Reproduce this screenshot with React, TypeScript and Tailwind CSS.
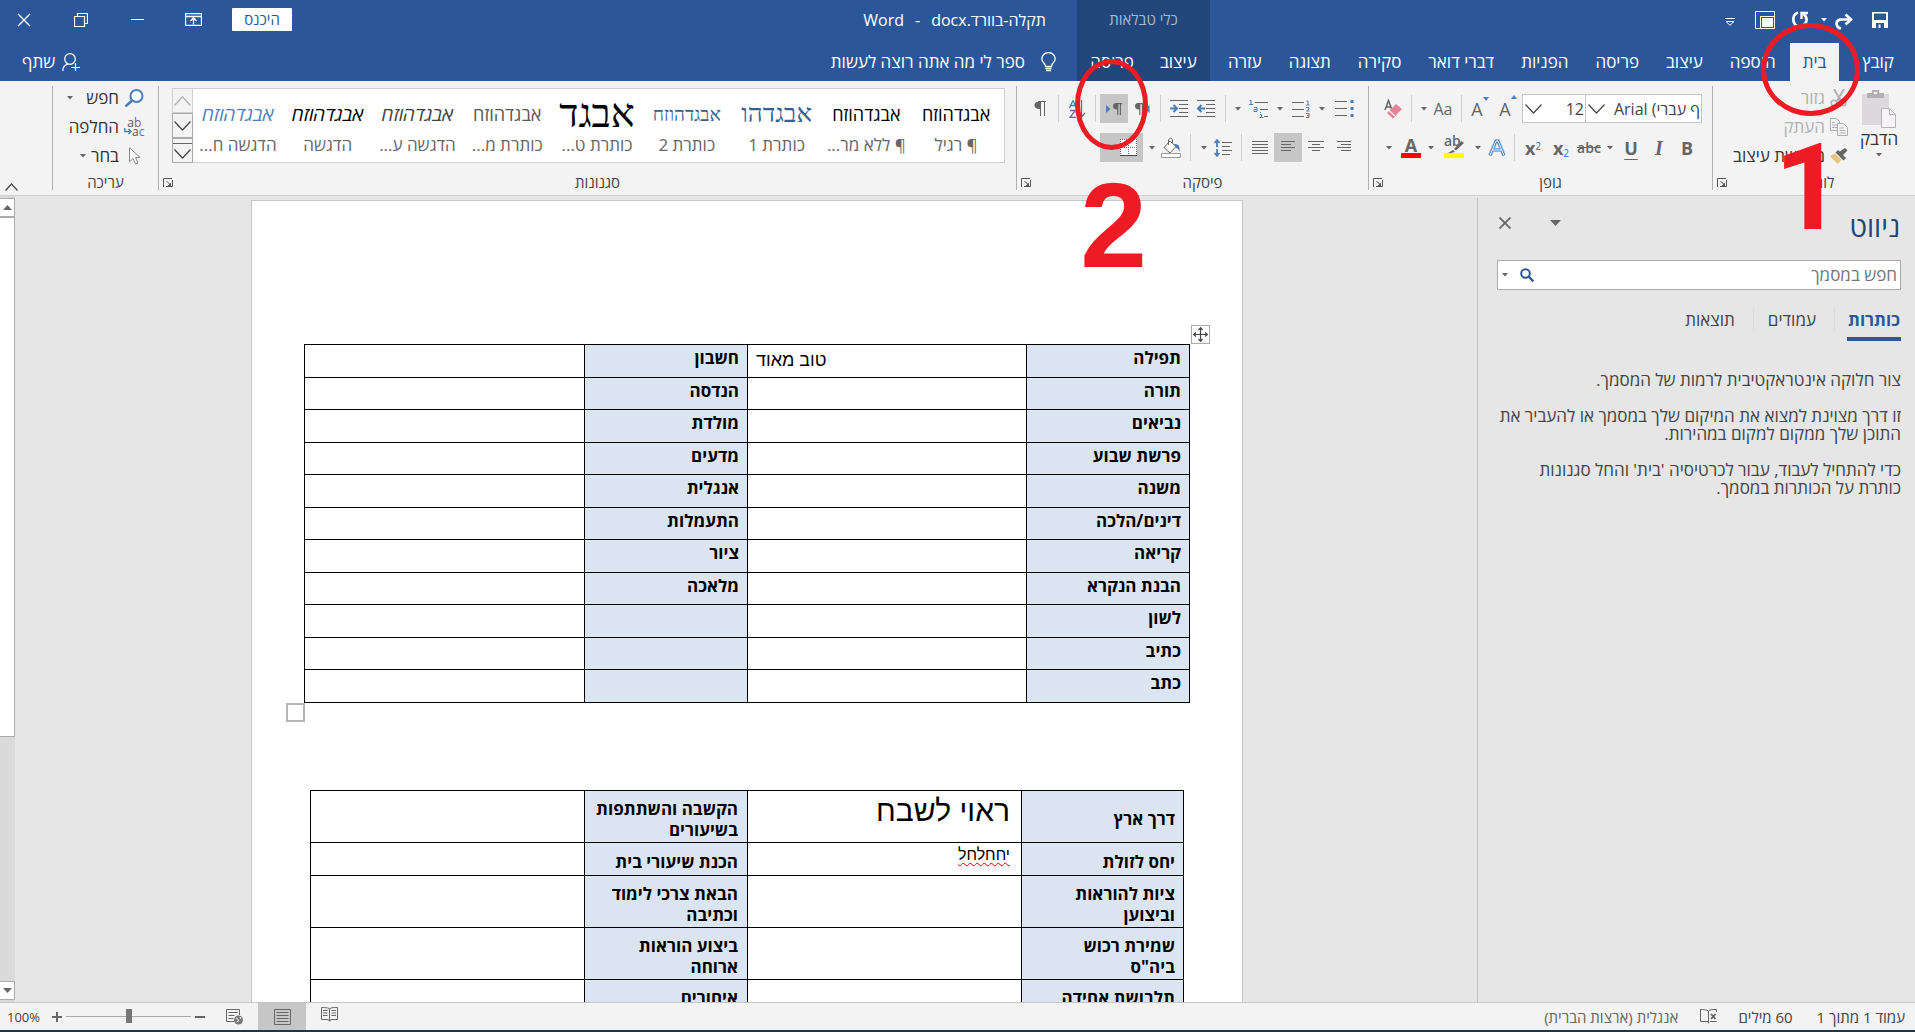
import React from "react";

type Kids = { children?: React.ReactNode };

function Svg({ w, h, children }: Kids & { w: number; h: number }) {
  return (
    <svg width={w} height={h} viewBox={`0 0 ${w} ${h}`} fill="none" aria-hidden className="shrink-0">
      {children}
    </svg>
  );
}

function Caret() {
  return (
    <Svg w={6} h={4}>
      <path d="M0 0h6L3 3.5z" fill="#666" />
    </Svg>
  );
}

function Tool({ name, w = "w-7", on = false, children }: Kids & { name: string; w?: string; on?: boolean }) {
  return (
    <button
      type="button"
      aria-label={name}
      aria-pressed={on}
      className={`${w} ${on ? "bg-[#c6c6c6]" : ""} flex h-[29px] shrink-0 items-center justify-center text-[#666]`}
    >
      {children}
    </button>
  );
}

function Drop({ name, w }: { name: string; w: string }) {
  return (
    <Tool name={name} w={w}>
      <Caret />
    </Tool>
  );
}

function Sep({ w = "w-[9px]" }: { w?: string }) {
  return (
    <span className={`${w} flex h-[27px] shrink-0 justify-center`}>
      <span className="w-px bg-[#d0d0d0]" />
    </span>
  );
}

function Group({ title, className = "", launcher = true, children }: Kids & { title: string; className?: string; launcher?: boolean }) {
  return (
    <section className={`flex h-[104px] shrink-0 flex-col border-l border-[#b1b1b1] ${className}`}>
      <div className="h-[90px]">{children}</div>
      <div className={`relative flex h-4 items-center justify-center text-[15px] leading-4 text-[#444] ${launcher ? "pl-5" : ""}`}>
        <span>{title}</span>
        {launcher && (
          <button type="button" aria-label={`${title} - אפשרויות`} className="absolute left-1 top-1">
            <Svg w={10} h={9}>
              <path d="M.5 9V.5H9M9.500 2v6.500H3M3.500 3l4 4" stroke="#555" />
              <path d="M8 4.500V8H4.500z" fill="#555" />
            </Svg>
          </button>
        )}
      </div>
    </section>
  );
}

const lines = (x1: number[], x2: number[]) => x1.map((a, i) => `M${a} ${i * 3 + 0.5}H${x2[i]}`).join("");

function QuickAccess() {
  return (
    <div className="flex h-[43px] items-center pr-[27px]">
      <button type="button" aria-label="שמור" className="pb-[3px]">
        <Svg w={16} h={16}>
          <path d="M0 0h16v16H0zM2 1.500v6.500h12V1.500zM4 11v5h8v-5z" fill="#fff" fillRule="evenodd" />
          <path d="M6.500 12.500h2V16h-2z" fill="#fff" />
        </Svg>
      </button>
      <button type="button" aria-label="בטל" className="mr-[19px] pb-px">
        <Svg w={18} h={17}>
          <path d="M6 15.500C1 14.500-.5 7.500 5.500 6.500h10" stroke="#fff" strokeWidth="2.600" />
          <path d="M10.500 1.500l5.500 5-5.500 5" stroke="#fff" strokeWidth="2.600" />
        </Svg>
      </button>
      <button type="button" aria-label="רשימת ביטולים" className="mr-2 pb-1">
        <Svg w={6} h={4}><path d="M0 0h6L3 3.500z" fill="#fff" /></Svg>
      </button>
      <button type="button" aria-label="חזור" className="mr-[13px] pb-1">
        <Svg w={16} h={17}>
          <path d="M6 1.500C0 3.500 0 12 5 15M10 15c5-2 6.500-8 1.500-12" stroke="#fff" strokeWidth="2.600" />
          <path d="M9.500 8V2H16" stroke="#fff" strokeWidth="2.400" />
        </Svg>
      </button>
      <button type="button" aria-label="מצב מגע" className="mr-[17px] pb-[3px]">
        <Svg w={20} h={18}>
          <path d="M.5.5h19v17H.5zM5.500 17.500v-12h14" stroke="#fff" />
          <path d="M7 7h11v9H7z" fill="#fff" />
        </Svg>
      </button>
      <button type="button" aria-label="התאמה אישית" className="mr-5">
        <Svg w={10} h={8}>
          <path d="M0 .5h10M1 3.500h8L5 7.300z" stroke="#fff" />
        </Svg>
      </button>
    </div>
  );
}

function Tab({ children, on = false }: Kids & { on?: boolean }) {
  return (
    <button
      type="button"
      role="tab"
      aria-selected={on}
      className={`flex h-[38px] items-center whitespace-nowrap px-[13px] text-[17px] leading-6 ${on ? "bg-[#f3f3f3] text-[#2b579a]" : "text-white"}`}
    >
      {children}
    </button>
  );
}

function Header() {
  return (
    <header className="flex h-[81px] shrink-0 bg-[#2b579a] text-white">
      <div className="w-[705px] shrink-0">
        <QuickAccess />
        <div role="tablist" className="flex gap-px pr-2">
          <Tab>קובץ</Tab>
          <span className="w-2" />
          <Tab on>בית</Tab>
          {["הוספה", "עיצוב", "פריסה", "הפניות", "דברי דואר", "סקירה", "תצוגה", "עזרה"].map((t) => (
            <Tab key={t}>{t}</Tab>
          ))}
        </div>
      </div>
      <div className="w-[133px] shrink-0 bg-[#22457a]">
        <div className="flex h-[43px] items-center justify-center pb-1 text-[15px] text-[#a5b8d6]">כלי טבלאות</div>
        <div className="flex justify-center">
          <Tab>עיצוב</Tab>
          <Tab>פריסה</Tab>
        </div>
      </div>
      <div className="min-w-0 flex-1">
        <div className="flex h-[43px] items-center pb-1">
          <h1 className="mr-[31px] flex gap-[11px] text-base">
            <bdi dir="rtl">תקלה-בוורד.docx</bdi>
            <bdi>-</bdi>
            <bdi>Word</bdi>
          </h1>
          <div className="mr-auto flex items-center pl-[17px]">
            <button type="button" className="flex h-[23px] w-[60px] items-center justify-center rounded-[1px] bg-white text-[15px] text-[#2b579a]">היכנס</button>
            <button type="button" aria-label="אפשרויות תצוגה של רצועת הכלים" className="mr-[30px]">
              <Svg w={17} h={13}>
                <path d="M.5.5h16v12H.5zM.5 3.500h16M8.500 11.500v-6M5.500 8l3-3 3 3" stroke="#fff" strokeWidth="1.300" />
              </Svg>
            </button>
            <button type="button" aria-label="מזער" className="mr-[41px]">
              <Svg w={13} h={13}><path d="M0 6.500h13" stroke="#fff" /></Svg>
            </button>
            <button type="button" aria-label="שחזר" className="mr-[43px]">
              <Svg w={14} h={14}><path d="M.5 3.500h10v10H.5zM3.500 3.500v-3h10v10h-3" stroke="#fff" strokeWidth="1.200" /></Svg>
            </button>
            <button type="button" aria-label="סגור" className="mr-[43px]">
              <Svg w={14} h={14}><path d="M1 1l12 12M13 1L1 13" stroke="#fff" strokeWidth="1.400" /></Svg>
            </button>
          </div>
        </div>
        <div className="flex h-[38px] items-center pr-[21px]">
          <Svg w={15} h={20}>
            <path d="M4.500 14.500C4.500 11 .8 10.500.8 6.800a6.700 6.200 0 0 1 13.400 0c0 3.700-3.700 4.200-3.700 7.700z" stroke="#fff" strokeWidth="1.300" />
            <path d="M4.500 16.500h6M5 18.500h5" stroke="#fff" strokeWidth="1.500" />
          </Svg>
          <button type="button" className="mr-4 text-[17px] leading-6">ספר לי מה אתה רוצה לעשות</button>
          <button type="button" className="ml-[22px] mr-auto flex items-center gap-[7px] text-[17px] leading-6">
            <Svg w={18} h={18}>
              <circle cx="8" cy="6" r="5.300" stroke="#fff" strokeWidth="1.200" />
              <path d="M.8 18c0-4 2-6 5-6.800M13.500 10v8M9 14.500h9" stroke="#fff" strokeWidth="1.200" />
            </Svg>
            שתף
          </button>
        </div>
      </div>
    </header>
  );
}

function ClipboardGroup() {
  return (
    <Group title="לוח" className="w-[203px]">
      <div className="flex pr-[14px]">
        <button type="button" className="flex w-11 flex-col items-center pt-1 text-[17px] leading-5 text-[#333]">
          <Svg w={34} h={38}>
            <path d="M0 4h27v31H0z" fill="#dcd8dc" />
            <path d="M5 3h5V0h7v3h5v5H5z" fill="#b3b0b3" />
            <path d="M12 2h3v2h-3z" fill="#f3f3f3" />
            <path d="M19.500 18.500h8l6 6v13h-14z" fill="#f7f4f9" stroke="#b5b2b5" />
            <path d="M27.500 18.500v6h6" stroke="#b5b2b5" />
          </Svg>
          <span className="mt-px">הדבק</span>
          <span className="mt-1"><Caret /></span>
        </button>
        <div className="mr-[9px] flex flex-col gap-[5px] text-[17px] leading-6">
          <button type="button" className="flex h-6 items-center gap-[5px] text-[#b1b1b1]">
            <Svg w={18} h={18}>
              <path d="M4 0l7 12M14 0L7 12" stroke="#b1b1b1" strokeWidth="2" />
              <circle cx="4" cy="14" r="2.800" stroke="#b1b1b1" strokeWidth="1.500" />
              <circle cx="13" cy="14" r="2.800" stroke="#b1b1b1" strokeWidth="1.500" />
            </Svg>
            גזור
          </button>
          <button type="button" className="flex h-6 items-center gap-[5px] text-[#b1b1b1]">
            <Svg w={18} h={18}>
              <path d="M.5.5h6l3 3v9h-9zM2 4.500h3M2 7h6M2 9.500h5" stroke="#b1aeb1" />
              <path d="M7.500 5.500h6l4 4v8h-10z" fill="#f7f4f9" stroke="#b1aeb1" />
              <path d="M9.500 10h4M9.500 12.500h6M9.500 15h6" stroke="#b1aeb1" />
            </Svg>
            העתק
          </button>
          <button type="button" className="flex h-6 items-center gap-[5px] text-[#333]">
            <Svg w={18} h={18}>
              <path d="M15 1l2.500 2.500-5 5L9 5z" fill="#666" />
              <path d="M8 3l8 8-2.500 2.500-8-8z" fill="#666" />
              <path d="M5 6.500l6.500 6.500L7.500 17 0 9z" fill="#eac282" />
            </Svg>
            מברשת עיצוב
          </button>
        </div>
      </div>
    </Group>
  );
}

function ChevronDown() {
  return (
    <Svg w={17} h={10}><path d="M.5.5l8 8.500 8-8.500" stroke="#444" strokeWidth="1.200" /></Svg>
  );
}

function FontGroup() {
  return (
    <Group title="גופן" className="w-[344px]">
      <div className="flex flex-col gap-[10px] pt-2">
        <div className="flex items-center pr-[10px]">
          <div className="flex h-[29px] w-[117px] items-center border border-[#c6c6c6] bg-white">
            <input aria-label="גופן" dir="ltr" defaultValue="Arial (ף עברי" className="min-w-0 flex-1 pr-px text-right text-base leading-6 text-[#444] outline-none" />
            <button type="button" aria-label="רשימת גופנים" className="ml-[2px]"><ChevronDown /></button>
          </div>
          <div className="-mr-px flex h-[29px] w-16 items-center border border-[#c6c6c6] bg-white">
            <input aria-label="גודל גופן" dir="ltr" defaultValue="12" className="min-w-0 flex-1 pr-px text-right text-base leading-6 text-[#444] outline-none" />
            <button type="button" aria-label="רשימת גדלים" className="ml-[2px]"><ChevronDown /></button>
          </div>
          <Tool name="הגדל גופן">
            <span dir="ltr" className="flex items-start"><span className="text-lg leading-7">A</span><Svg w={6} h={7}><path d="M0 4h6L3 0z" fill="#4a7ebb" /></Svg></span>
          </Tool>
          <Tool name="הקטן גופן">
            <span dir="ltr" className="flex items-start"><span className="text-lg leading-7">A</span><Svg w={6} h={7}><path d="M0 2h6L3 6z" fill="#4a7ebb" /></Svg></span>
          </Tool>
          <Sep />
          <Tool name="שנה רישיות"><span dir="ltr" className="text-base">Aa</span></Tool>
          <Drop name="אפשרויות רישיות" w="w-[10px]" />
          <Sep w="w-4" />
          <Tool name="נקה עיצוב" w="w-5">
            <Svg w={18} h={20}>
              <path d="M1 11L4.500 1.500 8 11M2.500 8h4" stroke="#666" strokeWidth="1.500" />
              <path d="M12 5l6 5-9 9.500-6-5.500z" fill="#e8849a" />
              <path d="M5 11.500l6 5.500" stroke="#f3f3f3" strokeWidth="1.200" />
            </Svg>
          </Tool>
        </div>
        <div className="flex items-center pr-[11px]">
          <Tool name="מודגש"><b className="text-lg">B</b></Tool>
          <Tool name="נטוי"><i className="font-['Liberation_Serif'] text-xl font-bold">I</i></Tool>
          <Tool name="קו תחתון"><span className="text-lg font-bold underline underline-offset-4">U</span></Tool>
          <Drop name="סגנון קו תחתון" w="w-[14px]" />
          <Tool name="קו חוצה"><span className="text-sm font-semibold line-through">abc</span></Tool>
          <Tool name="כתב תחתי"><span dir="ltr" className="text-lg font-bold leading-7">x<sub className="text-[10px] font-normal text-[#2b7cd3]">2</sub></span></Tool>
          <Tool name="כתב עילי"><span dir="ltr" className="text-lg font-bold leading-7">x<sup className="text-[10px] font-normal text-[#2b7cd3]">2</sup></span></Tool>
          <Sep />
          <Tool name="אפקטי טקסט" w="w-[26px]">
            <Svg w={18} h={18}>
              <path d="M2 16.500L8 2h2l6 14.500M4.500 11h9" stroke="#a9c9ee" strokeWidth="4" />
              <path d="M2 16.500L8 2h2l6 14.500M4.500 11h9" stroke="#3c7cc4" strokeWidth="2.600" />
              <path d="M2 16.500L8 2h2l6 14.500M4.500 11h9" stroke="#fff" />
            </Svg>
          </Tool>
          <Drop name="סוגי אפקטים" w="w-3" />
          <Tool name="צבע סימון" w="w-9">
            <span className="relative block h-[21px] w-5 border-b-[5px] border-[#ffff00]">
              <span dir="ltr" className="absolute -top-1 left-0 text-sm font-semibold leading-4">ab</span>
              <span className="absolute left-1 top-1"><Svg w={16} h={12}><path d="M13.500 0L16 2 8 9.500 6 8zM5 9l2 2-4 1H0z" fill="#666" /></Svg></span>
            </span>
          </Tool>
          <Drop name="צבעי סימון" w="w-[10px]" />
          <Tool name="צבע גופן" w="w-[30px]">
            <span className="flex h-[21px] w-5 items-center justify-center border-b-[5px] border-[#ff0000] text-lg font-bold leading-4">A</span>
          </Tool>
          <Drop name="צבעי גופן" w="w-[14px]" />
        </div>
      </div>
    </Group>
  );
}

function Pilcrow() {
  return <path d="M4 0h6v1.200h-1V12H7.800V1.200H6.400V12H5.200V6.500C2 6.500 1 5 1 3.300S2 0 4 0z" fill="#666" />;
}

function ParagraphGroup() {
  return (
    <Group title="פיסקה" className="w-[352px]">
      <div className="flex flex-col gap-[10px] pt-2">
        <div className="flex items-center pr-[10px]">
          <Tool name="תבליטים">
            <Svg w={19} h={17}>
              <path d="M0 1.500h12M0 8.500h12M0 15.500h12" stroke="#666" />
              <path d="M15.500 0h3v3h-3zM15.500 7h3v3h-3zM15.500 14h3v3h-3z" fill="#4a7ebb" />
            </Svg>
          </Tool>
          <Drop name="סוגי תבליטים" w="w-4" />
          <Tool name="מספור" w="w-[26px]">
            <Svg w={18} h={18}>
              <path d="M0 2.500h12M0 9.500h12M0 16.500h12" stroke="#666" />
              <path d="M14.500 1h1.500v4M14 5h3.500M14 7.500h3v1.500l-2.500 2h3M14 13.500h3v4h-3M15 15.500h2" stroke="#4a7ebb" />
            </Svg>
          </Tool>
          <Drop name="סוגי מספור" w="w-4" />
          <Tool name="רשימה רב-רמתית">
            <Svg w={19} h={18}>
              <path d="M6 2.500h13M11 9.500h8M15 16.500h4" stroke="#666" />
              <path d="M.5.500h1.500v4M0 4.500h4M5 7.500h3v4H5v-2h3M11 12.500h1M11 14.500h1.500v3M10.500 17.500h4" stroke="#4a7ebb" />
            </Svg>
          </Tool>
          <Drop name="סוגי רשימה" w="w-3" />
          <Sep w="w-[13px]" />
          <Tool name="הקטן כניסה" w="w-[26px]">
            <Svg w={18} h={17}>
              <path d="M0 .5h18M9 4.500h9M9 8.500h9M9 12.500h9M0 16.500h18" stroke="#666" />
              <path d="M8 8.500H1.500M4.500 5L1 8.500 4.500 12" stroke="#4a7ebb" strokeWidth="2" />
            </Svg>
          </Tool>
          <Tool name="הגדל כניסה">
            <Svg w={18} h={17}>
              <path d="M0 .5h18M9 4.500h9M9 8.500h9M9 12.500h9M0 16.500h18" stroke="#666" />
              <path d="M0 8.500h6.500M3.500 5L7 8.500 3.500 12" stroke="#4a7ebb" strokeWidth="2" />
            </Svg>
          </Tool>
          <Sep />
          <Tool name="כיוון טקסט מימין לשמאל">
            <Svg w={16} h={12}>
              <Pilcrow />
              <path d="M15.500 2v8L11 6z" fill="#4a7ebb" />
            </Svg>
          </Tool>
          <Tool name="כיוון טקסט משמאל לימין" on>
            <Svg w={16} h={12}>
              <path d="M0 2v8l4.500-4z" fill="#4a7ebb" />
              <g transform="translate(6 0)"><Pilcrow /></g>
            </Svg>
          </Tool>
          <Sep />
          <Tool name="מיין">
            <Svg w={17} h={18}>
              <path d="M.5 8L4 .5 7.500 8M1.500 5.500h5" stroke="#4a7ebb" strokeWidth="1.300" />
              <path d="M1 10.500h5.500L1 17.300h6" stroke="#8a56ac" strokeWidth="1.300" />
              <path d="M12.500 0v16.500M9 13l3.500 4 3.500-4" stroke="#666" strokeWidth="1.200" />
            </Svg>
          </Tool>
          <Sep />
          <Tool name="הצג סימני עיצוב">
            <Svg w={12} h={15}>
              <path d="M4 .5h8M10.500 1v14M6.500 1v14" stroke="#666" />
              <path d="M6.500.500v7.500C2 8 .5 6.500.5 4.200S2 .5 6.500.500z" fill="#666" />
            </Svg>
          </Tool>
        </div>
        <div className="flex items-center pr-[10px]">
          <Tool name="יישור לימין">
            <Svg w={14} h={13}><path d={lines([0, 4, 0, 4], [14, 14, 14, 14])} stroke="#666" /></Svg>
          </Tool>
          <Tool name="מרכוז">
            <Svg w={16} h={13}><path d={lines([0, 4, 0, 4], [16, 12, 16, 12])} stroke="#666" /></Svg>
          </Tool>
          <Tool name="יישור לשמאל" on>
            <Svg w={14} h={13}><path d={lines([0, 0, 0, 0], [14, 10, 14, 10])} stroke="#666" /></Svg>
          </Tool>
          <Tool name="יישור לשני הצדדים">
            <Svg w={16} h={13}><path d={lines([0, 0, 0, 0, 0], [16, 16, 16, 16, 16])} stroke="#666" /></Svg>
          </Tool>
          <Sep />
          <Tool name="מרווח בין שורות">
            <Svg w={18} h={18}>
              <path d="M8 3.500h10M8 7.500h8M8 11.500h10M8 15.500h8" stroke="#666" />
              <path d="M3 1v7M3 10v7M.5 4L3 1.200 5.500 4M.5 14L3 16.800 5.500 14" stroke="#4a7ebb" strokeWidth="1.800" />
            </Svg>
          </Tool>
          <Drop name="אפשרויות מרווח" w="w-[10px]" />
          <Sep w="w-[17px]" />
          <Tool name="הצללה" w="w-[22px]">
            <Svg w={20} h={20}>
              <path d="M9 3L3 9.500 9 15l6-6.500z" fill="#fff" stroke="#666" />
              <path d="M7.500 7V2c0-2 4-2 4 0v3" stroke="#666" />
              <path d="M13 6c5 0 6 2 5.500 8-1-3-2-4-3.500-4z" fill="#4a7ebb" />
              <path d="M.5 15.500h19v4H.5z" fill="#fff" stroke="#999" />
            </Svg>
          </Tool>
          <Drop name="צבעי הצללה" w="w-[17px]" />
          <Tool name="גבולות" w="w-[43px]" on>
            <span className="flex items-center gap-[7px]">
              <Svg w={17} h={17}>
                <path d="M0 0h17v17H0z" fill="#fff" />
                <path d="M.5 0v16M16.500 0v16M8.500 0v16M0 .5h17M0 8.500h17" stroke="#666" strokeDasharray="1 1" />
                <path d="M0 16.500h17" stroke="#444" />
              </Svg>
              <Caret />
            </span>
          </Tool>
        </div>
      </div>
    </Group>
  );
}

const sample = "אבגדהוזח";
const stylesList = [
  { name: "¶ רגיל", text: sample, cls: "text-black text-lg leading-none" },
  { name: "¶ ללא מר...", text: sample, cls: "text-black text-lg leading-none" },
  { name: "כותרת 1", text: "אבגדהו", cls: "text-[#365f91] font-['Liberation_Serif'] text-[26px] leading-none" },
  { name: "כותרת 2", text: sample, cls: "text-[#365f91] font-['Liberation_Serif'] text-[19px] leading-none" },
  { name: "כותרת ט...", text: "אבגד", cls: "text-black font-['Liberation_Serif'] text-[40px] leading-none" },
  { name: "כותרת מ...", text: sample, cls: "text-[#595959] text-lg leading-none" },
  { name: "הדגשה ע...", text: sample, cls: "text-[#404040] italic text-[19px] leading-none" },
  { name: "הדגשה", text: sample, cls: "text-black italic text-[19px] leading-none" },
  { name: "הדגשה ח...", text: sample, cls: "text-[#4f81bd] italic text-[19px] leading-none" },
];

function StylesGroup() {
  return (
    <Group title="סגנונות" className="min-w-0 flex-1">
      <div className="pl-[13px] pr-[11px] pt-[2px]">
        <div className="flex h-[75px] border border-[#d0d0d0] bg-white">
          <div className="grid min-w-0 flex-1 grid-cols-9 overflow-hidden pr-[3px]">
            {stylesList.map((s) => (
              <button key={s.name} type="button" className="flex min-w-0 flex-col items-center overflow-hidden whitespace-nowrap">
                <span className={`mt-1 flex h-[42px] items-center ${s.cls}`}>{s.text}</span>
                <span className="text-[17px] leading-5 text-[#666]">{s.name}</span>
              </button>
            ))}
          </div>
          <div className="-my-px -ml-px flex w-[21px] flex-col">
            <button type="button" aria-label="גלול למעלה" className="flex flex-1 items-center justify-center border border-[#d0d0d0] bg-[#f3f3f3]">
              <Svg w={17} h={10}><path d="M.5 9.500L8.500.8l8 8.700" stroke="#b1b1b1" strokeWidth="1.200" /></Svg>
            </button>
            <button type="button" aria-label="גלול למטה" className="flex flex-1 items-center justify-center border border-[#ababab] bg-[#f3f3f3]">
              <ChevronDown />
            </button>
            <button type="button" aria-label="עוד סגנונות" className="flex flex-1 flex-col items-center justify-center gap-[5px] border border-[#ababab] bg-[#f3f3f3]">
              <span className="h-px w-[19px] bg-[#666]" />
              <ChevronDown />
            </button>
          </div>
        </div>
      </div>
    </Group>
  );
}

function EditingGroup() {
  return (
    <Group title="עריכה" className="w-[106px]" launcher={false}>
      <div className="flex flex-col gap-[5px] pr-[14px] text-[17px] leading-6 text-[#333]">
        <button type="button" className="flex h-6 items-center gap-[5px]">
          <Svg w={20} h={18}>
            <circle cx="12.500" cy="7" r="6" stroke="#4a7ebb" strokeWidth="2" fill="#fff" />
            <path d="M8 11.500L1.500 17.500" stroke="#4a7ebb" strokeWidth="2.600" />
          </Svg>
          חפש
          <span className="mr-2"><Caret /></span>
        </button>
        <button type="button" className="flex h-6 items-center gap-[5px]">
          <span dir="ltr" className="grid w-5 shrink-0 text-xs leading-[9px]">
            <span className="text-[#555]">a<span className="text-[#8a56ac]">b</span></span>
            <span className="flex items-center text-[#555]">
              <Svg w={8} h={8}><path d="M.8 0v3.500H7M4.500 1L7 3.500 4.500 6" stroke="#4a7ebb" strokeWidth="1.400" /></Svg>
              a<span className="text-[#4a7ebb]">c</span>
            </span>
          </span>
          החלפה
        </button>
        <button type="button" className="flex h-6 items-center gap-[5px]">
          <Svg w={20} h={18}>
            <path d="M5.500.8v14l3.500-3.300 2.500 5.500 2.500-1-2.500-5.500H16z" fill="#fff" stroke="#888" />
          </Svg>
          בחר
          <Caret />
        </button>
      </div>
    </Group>
  );
}

function Ribbon() {
  return (
    <div className="flex h-[115px] shrink-0 border-b border-[#d0d0d0] bg-[#f3f3f3] pt-[5px]">
      <ClipboardGroup />
      <FontGroup />
      <ParagraphGroup />
      <StylesGroup />
      <EditingGroup />
      <div className="flex w-[52px] shrink-0 items-end justify-end pb-1 pl-[5px]">
        <button type="button" aria-label="כווץ את רצועת הכלים">
          <Svg w={13} h={8}><path d="M.5 7.500L6.500 1l6 6.500" stroke="#444" strokeWidth="1.200" /></Svg>
        </button>
      </div>
    </div>
  );
}

function NavPane() {
  return (
    <aside className="mt-[2px] w-[438px] shrink-0 border-l border-[#c0c0c0] pl-[19px] pr-[14px] text-[17px] text-[#444]">
      <div className="flex h-[62px] items-center">
        <h2 className="mr-px pb-[6px] text-[28px] leading-8 text-[#1e4478]">ניווט</h2>
        <button type="button" aria-label="אפשרויות חלונית" className="mr-auto pb-3">
          <Svg w={11} h={6}><path d="M0 0h11L5.500 6z" fill="#666" /></Svg>
        </button>
        <button type="button" aria-label="סגור חלונית" className="ml-[2px] mr-[39px] pb-3">
          <Svg w={12} h={12}><path d="M.5.5l11 11M11.500.5l-11 11" stroke="#666" strokeWidth="1.800" /></Svg>
        </button>
      </div>
      <div className="flex h-[30px] items-center border border-[#ababab] bg-white">
        <input aria-label="חפש במסמך" placeholder="חפש במסמך" className="min-w-0 flex-1 pr-[3px] leading-6 outline-none placeholder:text-[#767676]" />
        <button type="button" aria-label="חפש">
          <Svg w={14} h={14}>
            <circle cx="5.500" cy="5.500" r="4.300" stroke="#2b579a" strokeWidth="2" />
            <path d="M8.500 8.500l4.800 4.800" stroke="#2b579a" strokeWidth="2.400" />
          </Svg>
        </button>
        <button type="button" aria-label="אפשרויות חיפוש" className="ml-1 mr-3"><Caret /></button>
      </div>
      <div role="tablist" className="mt-[17px] flex h-[34px]">
        <button type="button" role="tab" aria-selected="true" className="w-[54px] border-b-4 border-[#2b579a] pb-1 text-center font-bold leading-6 text-[#2b579a]">כותרות</button>
        <span className="mr-3 h-6 w-px bg-[#dcdcdc]" />
        <button type="button" role="tab" aria-selected="false" className="mr-[18px] pb-2 leading-6">עמודים</button>
        <span className="mr-[14px] h-6 w-px bg-[#dcdcdc]" />
        <button type="button" role="tab" aria-selected="false" className="mr-[18px] pb-2 leading-6">תוצאות</button>
      </div>
      <div className="mt-[30px] flex flex-col gap-[18px] leading-[18px]">
        <p>צור חלוקה אינטראקטיבית לרמות של המסמך.</p>
        <p>זו דרך מצוינת למצוא את המיקום שלך במסמך או להעביר את התוכן שלך ממקום למקום במהירות.</p>
        <p>כדי להתחיל לעבוד, עבור לכרטיסיה 'בית' והחל סגנונות כותרת על הכותרות במסמך.</p>
      </div>
    </aside>
  );
}

const subjects: [string, string, string][] = [
  ["תפילה", "טוב מאוד", "חשבון"],
  ["תורה", "", "הנדסה"],
  ["נביאים", "", "מולדת"],
  ["פרשת שבוע", "", "מדעים"],
  ["משנה", "", "אנגלית"],
  ["דינים/הלכה", "", "התעמלות"],
  ["קריאה", "", "ציור"],
  ["הבנת הנקרא", "", "מלאכה"],
  ["לשון", "", ""],
  ["כתיב", "", ""],
  ["כתב", "", ""],
];

const conduct: { a: string; v?: React.ReactNode; b: string; tall: boolean }[] = [
  { a: "דרך ארץ", v: <span className="text-[30px] leading-10">ראוי לשבח</span>, b: "הקשבה והשתתפות\nבשיעורים", tall: true },
  { a: "יחס לזולת", v: <span className="text-base leading-5 underline decoration-[#ff0000] decoration-wavy decoration-1 underline-offset-2">יחחלחל</span>, b: "הכנת שיעורי בית", tall: false },
  { a: "ציות להוראות\nוביצוען", b: "הבאת צרכי לימוד\nוכתיבה", tall: true },
  { a: "שמירת רכוש\nביה\"ס", b: "ביצוע הוראות\nארוחה", tall: true },
  { a: "תלבושת אחידה\n\u00a0", b: "איחורים\n\u00a0", tall: true },
];

const head = "whitespace-pre-line border border-black bg-[#dbe5f1] text-right font-['Open_Sans'] text-[17px] font-bold leading-[21px] text-black";
const cell = "border border-black align-top";

function Page() {
  return (
    <article className="mx-auto mt-1 h-[1100px] w-[992px] border border-[#c6c6c6] bg-white pt-[143px] font-['Liberation_Sans',sans-serif] text-black">
      <div className="relative mx-auto w-[886px]">
        <table className="h-[359px] w-full table-fixed border-collapse">
          <colgroup><col className="w-[163px]" /><col /><col className="w-[163px]" /><col className="w-[280px]" /></colgroup>
          <tbody>
            {subjects.map(([a, v, b]) => (
              <tr key={a}>
                <th scope="row" className={`${head} pr-2 pt-[2px] align-top`}>{a}</th>
                <td className={`${cell} pl-2 pt-[7px] text-left text-lg leading-4`}>{v}</td>
                <th scope="row" className={`${head} pr-2 pt-[2px] align-top`}>{b}</th>
                <td className={cell} />
              </tr>
            ))}
          </tbody>
        </table>
        <span className="absolute -right-[20px] -top-[19px] flex h-[19px] w-[19px] items-center justify-center border border-[#ababab] bg-white">
          <Svg w={15} h={15}>
            <path d="M7.500 1v13M1 7.500h13M5.500 3l2-2.300 2 2.300M5.500 12l2 2.300 2-2.300M3 5.500L.7 7.500 3 9.500M12 5.500l2.300 2-2.300 2" stroke="#444" strokeWidth="1.200" />
          </Svg>
        </span>
        <span className="absolute -bottom-[19px] -left-[18px] h-[19px] w-[19px] border-2 border-[#b5b5b5] bg-white" />
      </div>
      <table className="mx-auto mt-[87px] w-[874px] table-fixed border-collapse">
        <colgroup><col className="w-[162px]" /><col /><col className="w-[163px]" /><col className="w-[274px]" /></colgroup>
        <tbody>
          {conduct.map((r) => (
            <tr key={r.a} className={r.tall ? "h-[52px]" : "h-[33px]"}>
              <th scope="row" className={`${head} pr-2 pt-1`}>{r.a}</th>
              <td className={`${cell} pr-[11px]`}>{r.v}</td>
              <th scope="row" className={`${head} pr-[9px] pt-1`}>{r.b}</th>
              <td className={cell} />
            </tr>
          ))}
        </tbody>
      </table>
    </article>
  );
}

function ScrollBar() {
  return (
    <div className="flex w-[15px] shrink-0 flex-col bg-[#dadada] pb-[2px] pt-[2px]">
      <button type="button" aria-label="גלול למעלה" className="flex h-[19px] items-center justify-center border border-l-0 border-[#ababab] bg-white">
        <Svg w={9} h={5}><path d="M0 5h9L4.500 0z" fill="#666" /></Svg>
      </button>
      <div className="h-[520px] border border-l-0 border-[#ababab] bg-white" />
      <button type="button" aria-label="גלול למטה" className="mt-auto flex h-[19px] items-center justify-center border border-l-0 border-[#ababab] bg-white">
        <Svg w={9} h={5}><path d="M0 0h9L4.500 5z" fill="#666" /></Svg>
      </button>
    </div>
  );
}

function StatusBar() {
  return (
    <footer className="flex h-7 shrink-0 items-center border-t border-[#c6c6c6] bg-[#f3f3f3] text-[15px] leading-5 text-[#444]">
      <span className="mr-[10px]">עמוד 1 מתוך 1</span>
      <span className="mr-6">60 מילים</span>
      <button type="button" aria-label="הגהה" className="mr-[21px]">
        <Svg w={17} h={15}>
          <path d="M8.500 2C6 .5 3 .5.500.500v12h8M8.500 2v12.500M8.500 2C10 .500 13 .5 16.500.5V3M16.500 12v.5H10" stroke="#666" />
          <path d="M11 5l4.500 5M15.500 5L11 10" stroke="#666" strokeWidth="1.800" />
        </Svg>
      </button>
      <span className="mr-[22px] text-[#666]">אנגלית (ארצות הברית)</span>
      <div className="mr-auto flex h-full items-center">
        <button type="button" aria-label="מצב קריאה" className="pb-1">
          <Svg w={17} h={15}>
            <path d="M8.500 1.500v13M8.500 1.500C6 .5 3 .5.500.500v12h5.500l2.500 1 2.500-1h5.500V.5C13 .5 11 .5 8.500 1.500z" stroke="#666" />
            <path d="M2 3.500h4.500M2 6h4.500M2 8.500h4.500M10.500 3.500H15M10.500 6H15M10.500 8.500H15" stroke="#666" />
          </Svg>
        </button>
        <button type="button" aria-label="פריסת הדפסה" aria-pressed="true" className="mr-[15px] flex h-full w-12 items-center justify-center bg-[#c6c6c6]">
          <Svg w={17} h={16}>
            <path d="M.5.5h16v15H.5zM2.500 3.500h12M2.500 6.500h12M2.500 9.500h12M2.500 12.500h12" stroke="#666" />
          </Svg>
        </button>
        <button type="button" aria-label="פריסת אינטרנט" className="mr-[15px]">
          <Svg w={17} h={16}>
            <path d="M8 12.500H.5V.5h13V6M2.500 3.500h9M2.500 6.500h6M2.500 9.500h5" stroke="#666" />
            <circle cx="12.500" cy="11" r="4.500" fill="#777" />
            <path d="M10 9l2 1 .5 2-2 1M14 8l1 2" stroke="#f3f3f3" />
          </Svg>
        </button>
        <button type="button" aria-label="הקטן" className="mr-[21px]">
          <Svg w={10} h={10}><path d="M0 5h10" stroke="#666" strokeWidth="2" /></Svg>
        </button>
        <input
          type="range"
          aria-label="זום"
          defaultValue={50}
          className="mr-1 h-4 w-[125px] appearance-none bg-transparent [&::-webkit-slider-runnable-track]:h-px [&::-webkit-slider-runnable-track]:bg-[#ababab] [&::-webkit-slider-thumb]:-mt-[7px] [&::-webkit-slider-thumb]:h-[14px] [&::-webkit-slider-thumb]:w-[6px] [&::-webkit-slider-thumb]:appearance-none [&::-webkit-slider-thumb]:bg-[#777]"
        />
        <button type="button" aria-label="הגדל" className="mr-1">
          <Svg w={10} h={10}><path d="M0 5h10M5 0v10" stroke="#666" strokeWidth="2" /></Svg>
        </button>
        <span dir="ltr" className="ml-[7px] mr-3 text-[13px]">100%</span>
      </div>
    </footer>
  );
}

function Marks() {
  return (
    <div className="pointer-events-none text-[120px] font-bold leading-none text-[#ed1c24]">
      <span className="absolute right-[55px] top-[23px] h-[93px] w-[99px] rounded-[50%] border-[5px] border-[#ed1c24]" />
      <span className="absolute right-[767px] top-[59px] h-[91px] w-[73px] rounded-[50%] border-[5px] border-[#ed1c24]" />
      <span className="absolute right-[72px] top-32 font-['Roboto']">1</span>
      <span className="absolute right-[768px] top-[165px] font-['Liberation_Sans']">2</span>
    </div>
  );
}

export default function App() {
  return (
    <div dir="rtl" className="relative flex h-screen flex-col overflow-hidden bg-[#e6e6e6] font-['Open_Sans','Noto_Sans_Hebrew',sans-serif]">
      <Header />
      <Ribbon />
      <div className="flex min-h-0 flex-1">
        <NavPane />
        <main className="min-w-0 flex-1 overflow-hidden pl-[2px]">
          <Page />
        </main>
        <ScrollBar />
      </div>
      <StatusBar />
      <div className="h-[2px] shrink-0 bg-[#1f3340]" />
      <Marks />
    </div>
  );
}
